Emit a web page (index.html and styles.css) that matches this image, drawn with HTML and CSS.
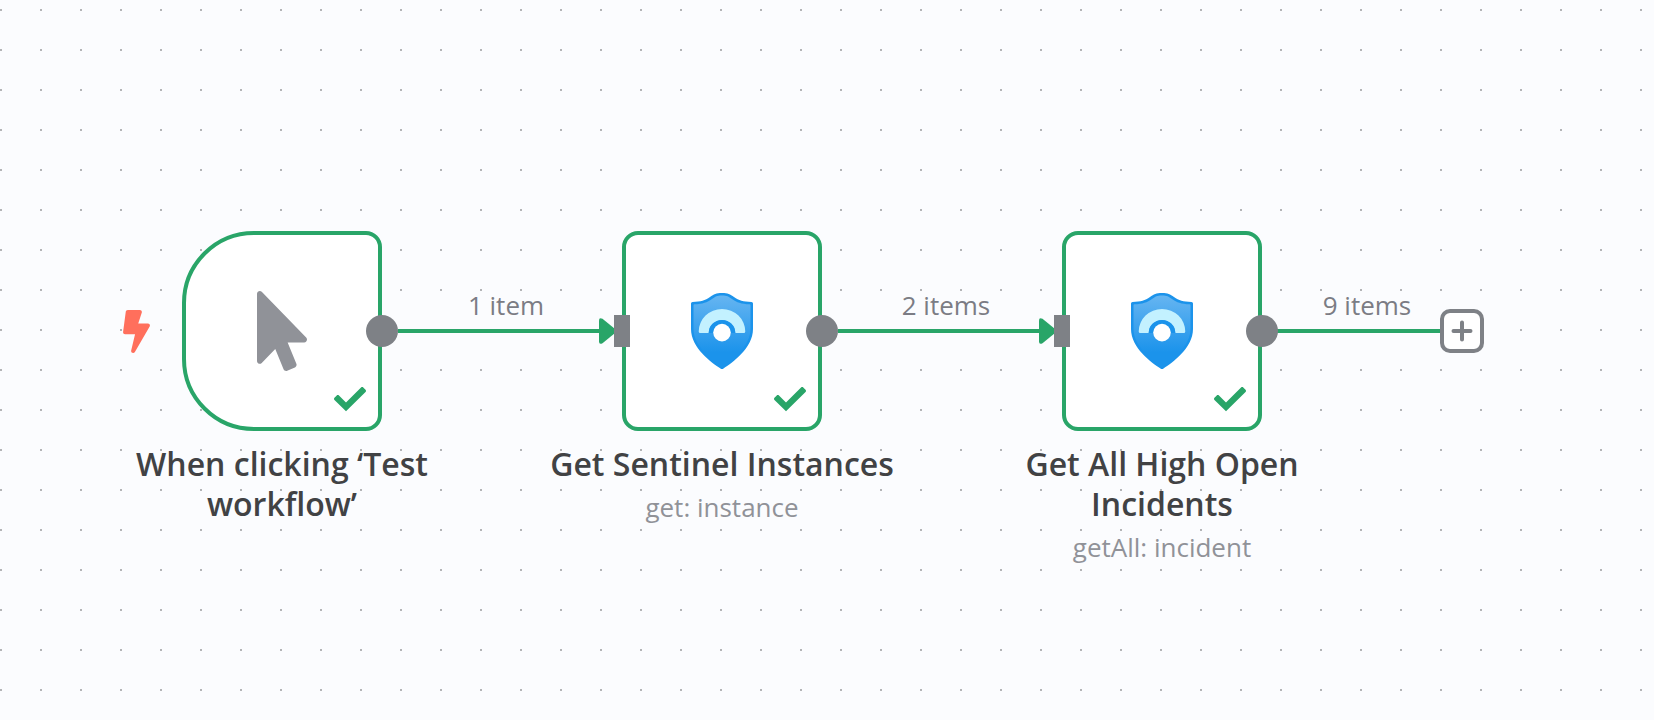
FILE: index.html
```html
<!DOCTYPE html>
<html lang="en">
<head>
<meta charset="utf-8">
<title>Workflow</title>
<link rel="stylesheet" href="styles.css">
</head>
<body>
<svg class="symbols" aria-hidden="true">
  <defs>
    <linearGradient id="shield-fill" x1="0" y1="0" x2="0" y2="1">
      <stop offset="0" stop-color="#66b5f1"/>
      <stop offset="0.8" stop-color="#1b93eb"/>
    </linearGradient>
    <symbol id="check" viewBox="0 0 512 512">
      <path d="M192 450L7.5 273c-10-10-10-26.200 0-36.200l36.200-36.200c10-10 26.200-10 36.200 0L192 312.700 432.100 72.600c10-10 26.200-10 36.200 0l36.200 36.200c10 10 10 26.200 0 36.200z"/>
    </symbol>
    <symbol id="shield" viewBox="0 0 62 76">
      <path fill="#1b93eb" d="M1.500 9C10 8.700 14 7.500 19 4C23 1.200 25 0 31 0S39 1.200 43 4C48 7.500 52 8.700 60.500 9Q62 9 62 10.500V36C62 55 41 70 32.500 75.400Q31 76.400 29.500 75.400C21 70 0 55 0 36V10.500Q0 9 1.500 9Z"/>
      <path fill="url(#shield-fill)" d="M3.500 11.300C12 11 16 9.500 21 6C24.500 3.500 26 2.500 31 2.500S37.500 3.500 41 6C46 9.500 50 11 58.500 11.300Q59.500 11.300 59.500 12.300V36C59.500 53 41 67 31 73.500C21 67 2.500 53 2.500 36V12.300Q2.500 11.300 3.500 11.300Z"/>
      <path fill="#c3f1ff" d="M9.200 40Q7.700 40 7.700 38.500A23.300 22.500 0 0 1 54.300 38.500Q54.300 40 52.800 40H44.300A13.300 13 0 0 0 17.700 40Z"/>
      <path fill="#1b93eb" d="M17.700 40A13.300 13 0 0 1 44.300 40Z"/>
      <circle cx="31" cy="39.600" r="8.800" fill="#fff"/>
    </symbol>
  </defs>
</svg>

<main class="canvas">
  <div class="edge edge-first"><span class="edge-label">1 item</span>
    <svg class="arrow" viewBox="0 0 20 26" aria-hidden="true"><path d="M0 2.500Q0-1 3.500 0.800L18.500 13L3.500 25.200Q0 27 0 23.500Z"/></svg>
  </div>
  <div class="edge edge-second"><span class="edge-label">2 items</span>
    <svg class="arrow" viewBox="0 0 20 26" aria-hidden="true"><path d="M0 2.500Q0-1 3.500 0.800L18.500 13L3.500 25.200Q0 27 0 23.500Z"/></svg>
  </div>
  <div class="edge edge-last"><span class="edge-label">9 items</span></div>

  <article class="node node-trigger">
    <div class="node-box trigger">
      <svg class="bolt" viewBox="0 0 320 512" aria-hidden="true"><path d="M296 160H180.600l42.600-129.800C227.200 15 215.700 0 200 0H56C44 0 33.800 8.900 32.200 20.800l-32 240C-1.700 275.200 9.500 288 24 288h118.700L96.600 482.500c-3.600 15.200 8 29.500 23.300 29.500 8.400 0 16.400-4.400 20.800-12l176-304c9.300-15.900-2.200-36-20.700-36z"/></svg>
      <svg class="pointer" viewBox="0 0 320 512" aria-hidden="true"><path d="M302.189 329.126H196.105l55.831 135.993c3.889 9.428-.555 19.999-9.444 23.999l-49.165 21.427c-9.165 4-19.443-.571-23.332-9.714l-53.053-129.136-86.664 89.138C18.729 472.710 0 463.554 0 447.977V18.299C0 1.899 19.921-6.096 30.277 5.443l284.412 292.542c11.472 11.179 3.007 31.141-12.500 31.141z"/></svg>
      <svg class="check" aria-hidden="true"><use href="#check"/></svg>
      <span class="output"></span>
    </div>
    <h2 class="node-title">When clicking ‘Test workflow’</h2>
  </article>

  <article class="node node-instances">
    <div class="node-box">
      <span class="input"></span>
      <svg class="shield" aria-hidden="true"><use href="#shield"/></svg>
      <svg class="check" aria-hidden="true"><use href="#check"/></svg>
      <span class="output"></span>
    </div>
    <h2 class="node-title">Get Sentinel Instances</h2>
    <p class="node-subtitle">get: instance</p>
  </article>

  <article class="node node-incidents">
    <div class="node-box">
      <span class="input"></span>
      <svg class="shield" aria-hidden="true"><use href="#shield"/></svg>
      <svg class="check" aria-hidden="true"><use href="#check"/></svg>
      <span class="output"></span>
    </div>
    <h2 class="node-title">Get All High Open Incidents</h2>
    <p class="node-subtitle">getAll: incident</p>
  </article>

  <button class="add" type="button" aria-label="Add node">
    <svg class="plus" viewBox="0 0 20 20" aria-hidden="true"><path d="M10 1.500V18.500M1.500 10H18.500"/></svg>
  </button>
</main>
</body>
</html>
```

FILE: styles.css
```css
* {
  box-sizing: border-box;
}

body {
  margin: 0;
  font-family: "Open Sans", sans-serif;
}

.symbols {
  position: absolute;
  width: 0;
  height: 0;
}

.canvas {
  position: relative;
  min-height: 100vh;
  overflow: hidden;
  background-color: #fbfcfe;
  background-image: conic-gradient(from 270deg at 2px 2px, #b3b4b6 90deg, transparent 0);
  background-size: 40px 40px;
  background-position: 0 9px;
}

/* Nodes */
.node {
  position: absolute;
  top: 231px;
  width: 360px;
  display: flex;
  flex-direction: column;
  align-items: center;
  text-align: center;
}

.node-trigger {
  left: 102px;
}

.node-instances {
  left: 542px;
}

.node-incidents {
  left: 982px;
}

.node-box {
  position: relative;
  display: flex;
  align-items: center;
  justify-content: center;
  width: 200px;
  height: 200px;
  border: 4px solid #29a568;
  border-radius: 16px;
  background: #fff;
}

.trigger {
  border-radius: 72px 16px 16px 72px;
}

.pointer {
  width: 50px;
  height: 80px;
  fill: #909298;
}

.shield {
  width: 62px;
  height: 76px;
}

.check {
  position: absolute;
  right: 12px;
  bottom: 12px;
  width: 32px;
  height: 32px;
  fill: #29a568;
}

.bolt {
  position: absolute;
  left: -63px;
  top: 75px;
  width: 27px;
  height: 43px;
  fill: #ff6f5c;
}

.input,
.output {
  position: absolute;
  top: 80px;
  height: 32px;
  background: #7e8186;
}

.input {
  left: -12px;
  width: 16px;
}

.output {
  right: -20px;
  width: 32px;
  border-radius: 50%;
}

.node-title {
  margin: 13px 0 0;
  font-size: 32px;
  font-weight: 600;
  line-height: 40px;
  color: #414244;
}

.node-subtitle {
  margin: 4px 0 0;
  font-size: 26px;
  line-height: 38px;
  color: #909298;
}

/* Connections */
.edge {
  position: absolute;
  top: 287px;
  display: flex;
  justify-content: center;
  height: 46px;
  border-bottom: 4px solid #29a568;
}

.edge-first {
  left: 398px;
  width: 216px;
}

.edge-second {
  left: 838px;
  width: 216px;
}

.edge-last {
  left: 1277px;
  width: 164px;
  padding-left: 16px;
}

.edge-label {
  font-size: 26px;
  line-height: 36px;
  color: #7b7c84;
}

.arrow {
  position: absolute;
  right: -5px;
  bottom: -15px;
  width: 20px;
  height: 26px;
  fill: #29a568;
}

.add {
  position: absolute;
  left: 1440px;
  top: 309px;
  display: flex;
  align-items: center;
  justify-content: center;
  width: 44px;
  height: 44px;
  padding: 0;
  border: 4px solid #7e8186;
  border-radius: 10px;
  background: #fff;
}

.plus {
  width: 20px;
  height: 20px;
  overflow: visible;
  fill: none;
  stroke: #7e8186;
  stroke-width: 4;
  stroke-linecap: round;
}
```
